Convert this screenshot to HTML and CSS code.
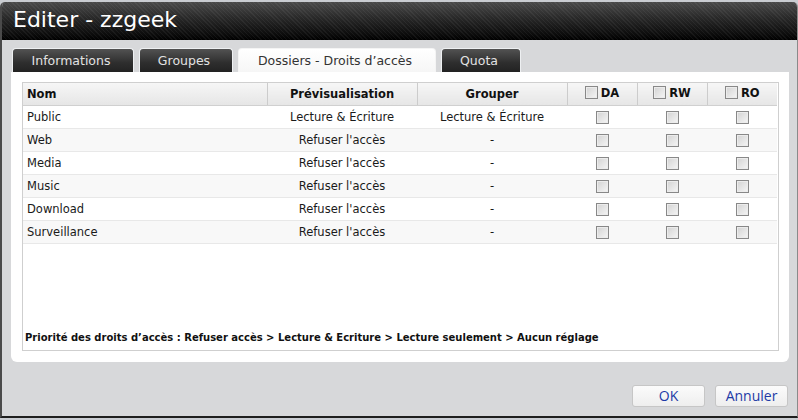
FILE: index.html
```html
<!DOCTYPE html>
<html lang="fr">
<head>
<meta charset="utf-8">
<title>Editer - zzgeek</title>
<link rel="stylesheet" href="styles.css">
</head>
<body>
<div class="dialog">
  <div class="titlebar"><h1 class="title">Editer - zzgeek</h1></div>
  <div class="body">
    <div class="tabs">
      <div class="tab tab-info">Informations</div>
      <div class="tab tab-groups">Groupes</div>
      <div class="tab tab-active tab-folders">Dossiers - Droits d’accès</div>
      <div class="tab tab-quota">Quota</div>
    </div>
    <div class="panel">
      <div class="grid-box">
        <table class="grid">
          <colgroup>
            <col class="c-name"><col class="c-prev"><col class="c-group"><col class="c-perm"><col class="c-perm"><col class="c-perm-last">
          </colgroup>
          <thead>
            <tr>
              <th class="left">Nom</th>
              <th>Prévisualisation</th>
              <th>Grouper</th>
              <th><span class="hcell"><input type="checkbox" class="cb">DA</span></th>
              <th><span class="hcell"><input type="checkbox" class="cb">RW</span></th>
              <th class="last"><span class="hcell"><input type="checkbox" class="cb">RO</span></th>
            </tr>
          </thead>
          <tbody>
            <tr><td class="left">Public</td><td>Lecture &amp; Écriture</td><td>Lecture &amp; Écriture</td><td><input type="checkbox" class="cb"></td><td><input type="checkbox" class="cb"></td><td><input type="checkbox" class="cb"></td></tr>
            <tr><td class="left">Web</td><td>Refuser l'accès</td><td>-</td><td><input type="checkbox" class="cb"></td><td><input type="checkbox" class="cb"></td><td><input type="checkbox" class="cb"></td></tr>
            <tr><td class="left">Media</td><td>Refuser l'accès</td><td>-</td><td><input type="checkbox" class="cb"></td><td><input type="checkbox" class="cb"></td><td><input type="checkbox" class="cb"></td></tr>
            <tr><td class="left">Music</td><td>Refuser l'accès</td><td>-</td><td><input type="checkbox" class="cb"></td><td><input type="checkbox" class="cb"></td><td><input type="checkbox" class="cb"></td></tr>
            <tr><td class="left">Download</td><td>Refuser l'accès</td><td>-</td><td><input type="checkbox" class="cb"></td><td><input type="checkbox" class="cb"></td><td><input type="checkbox" class="cb"></td></tr>
            <tr><td class="left">Surveillance</td><td>Refuser l'accès</td><td>-</td><td><input type="checkbox" class="cb"></td><td><input type="checkbox" class="cb"></td><td><input type="checkbox" class="cb"></td></tr>
          </tbody>
        </table>
        <p class="note">Priorité des droits d’accès : Refuser accès &gt; Lecture &amp; Ecriture &gt; Lecture seulement &gt; Aucun réglage</p>
      </div>
    </div>
    <div class="actions">
      <button class="btn" type="button">OK</button>
      <button class="btn" type="button">Annuler</button>
    </div>
  </div>
</div>
</body>
</html>
```

FILE: styles.css
```css
* { box-sizing: border-box; }
html, body { margin: 0; padding: 0; }
body {
  width: 798px;
  height: 420px;
  overflow: hidden;
  background: #c9ccd1;
  padding-top: 2px;
  font-family: "DejaVu Sans", Verdana, sans-serif;
}
.dialog {
  height: 416px;
  display: flex;
  flex-direction: column;
  background: #d7d8da;
  border-left: 2px solid #4a4a4a;
  border-right: 1px solid #8a8a8a;
  border-bottom: 2px solid #1e1e1e;
  border-radius: 5px 5px 0 0;
  overflow: hidden;
}
.titlebar {
  height: 38px;
  flex: none;
  background:
    repeating-linear-gradient(45deg, rgba(255,255,255,0.05) 0 1px, rgba(0,0,0,0) 1px 3px),
    linear-gradient(#4a4a4a 0%, #2a2a2a 40%, #0c0c0c 85%, #000 100%);
  padding-left: 11px;
  display: flex;
  align-items: center;
}
.title {
  margin: 0;
  color: #fff;
  font-family: "DejaVu Sans", sans-serif;
  font-weight: normal;
  font-size: 22px;
  line-height: 1;
  padding-bottom: 2px;
}
.body {
  flex: 1;
  display: flex;
  flex-direction: column;
  padding: 8px 8px 0 9px;
}
.tabs {
  display: flex;
  gap: 5px;
  height: 24px;
  padding-left: 1px;
}
.tab {
  height: 24px;
  border: 1px solid #eef0f2;
  border-bottom: none;
  border-radius: 4px 4px 0 0;
  background: linear-gradient(#525252, #2e2e2e 60%, #222);
  color: #e2e2e2;
  font-size: 12.5px;
  line-height: 23px;
  text-align: center;
  padding-right: 4px;
}
.tab-info { width: 122px; }
.tab-groups { width: 94px; }
.tab-folders { width: 198px; }
.tab-quota { width: 80px; }
.tab-active {
  background: linear-gradient(#ffffff, #f6f6f6);
  color: #333;
  border-color: #f4f4f4;
}
.panel {
  height: 290px;
  background: #fff;
  border-radius: 0 0 6px 6px;
  padding: 10px 10px 11px 11px;
}
.grid-box {
  height: 269px;
  border: 1px solid #cfcfcf;
  display: flex;
  flex-direction: column;
}
.grid {
  width: 754px;
  border-collapse: collapse;
  table-layout: fixed;
  font-size: 11.5px;
  color: #1a1a1a;
}
.c-name { width: 244px; }
.c-prev { width: 150px; }
.c-group { width: 150px; }
.c-perm { width: 70px; }
.c-perm-last { width: 70px; }
.grid th {
  height: 22px;
  padding: 0;
  font-weight: bold;
  color: #111;
  background: linear-gradient(#f6f6f6, #e6e6e6);
  border-right: 1px solid #cccccc;
  border-bottom: 1px solid #d0d0d0;
  text-align: center;
  vertical-align: middle;
}
.grid th.last { border-right: none; }
.grid th.left, .grid td.left { text-align: left; padding-left: 4px; }
.hcell {
  display: inline-flex;
  align-items: center;
  gap: 3px;
}
.grid td {
  height: 23px;
  padding: 1px 0 0 0;
  text-align: center;
  vertical-align: middle;
  border-bottom: 1px solid #e8e8e8;
}
.grid tbody tr:nth-child(even) td { background: #f8f8f8; }
.cb {
  appearance: none;
  -webkit-appearance: none;
  width: 13px;
  height: 13px;
  margin: 0;
  border: 1px solid #888888;
  background: linear-gradient(135deg, #d2d2d2, #f6f6f6);
  box-shadow: inset 0 0 0 1px #ececec;
  vertical-align: middle;
  display: inline-block;
}
.note {
  margin: auto 0 7px 0;
  padding-left: 2px;
  font-size: 10px;
  font-weight: bold;
  color: #111;
}
.actions {
  display: flex;
  justify-content: flex-end;
  gap: 10px;
  padding-top: 23px;
  padding-right: 1px;
}
.btn {
  width: 73px;
  height: 22px;
  border: 1px solid #c6c6c6;
  border-radius: 3px;
  background: linear-gradient(#fbfbfb, #eeeeee);
  color: #1d3aa6;
  font-family: "Open Sans", "DejaVu Sans", sans-serif;
  font-size: 14px;
  line-height: 20px;
  padding: 0;
}
```
